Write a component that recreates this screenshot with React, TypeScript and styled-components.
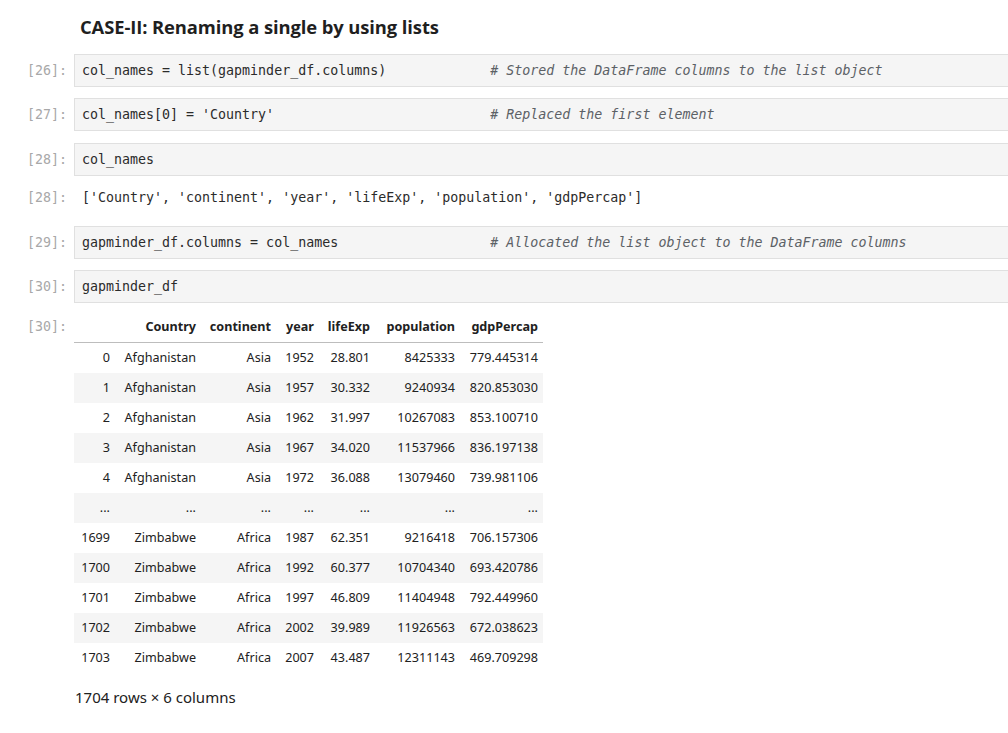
import React from "react";
import styled, { createGlobalStyle } from "styled-components";

const Global = createGlobalStyle`
  html, body { margin: 0; padding: 0; background: #ffffff; overflow: hidden; }
  body { font-family: "Noto Sans", "Open Sans", sans-serif; color: #212121; }
`;

const Page = styled.div`
  width: 1008px;
  height: 733px;
  overflow: hidden;
`;

const Notebook = styled.div`
  width: 1100px;
  display: flex;
  flex-direction: column;
  padding-top: 14px;
`;

const Heading = styled.h2`
  margin: 0 0 14px 80px;
  font-family: "Open Sans", "Noto Sans", sans-serif;
  font-weight: 700;
  font-size: 18.4px;
  line-height: 26px;
  color: #1f1f1f;
  letter-spacing: -0.1px;
`;

const Row = styled.div<{ $mt?: number }>`
  display: flex;
  align-items: flex-start;
  margin-top: ${(p) => p.$mt ?? 0}px;
`;

const Prompt = styled.div<{ $pt?: number }>`
  width: 67px;
  flex: 0 0 67px;
  padding-right: 7px;
  padding-top: ${(p) => p.$pt ?? 8}px;
  text-align: right;
  font-family: "DejaVu Sans Mono", "Liberation Mono", monospace;
  font-size: 13.3px;
  line-height: 17px;
  color: #a8a8a8;
  white-space: pre;
`;

const CodeBox = styled.div`
  flex: 1;
  background: #f5f5f5;
  border: 1px solid #e0e0e0;
  padding: 7px 7px;
  font-family: "DejaVu Sans Mono", "Liberation Mono", monospace;
  font-size: 13.3px;
  line-height: 17px;
  color: #2b2b2b;
  white-space: pre;
`;

const Comment = styled.span`
  font-style: italic;
  color: #5c6166;
`;

const OutText = styled.div`
  padding: 0 8px;
  font-family: "DejaVu Sans Mono", "Liberation Mono", monospace;
  font-size: 13.3px;
  line-height: 17px;
  color: #2b2b2b;
  white-space: pre;
`;

const OutputArea = styled.div`
  display: flex;
  flex-direction: column;
`;

const Table = styled.table`
  border-collapse: collapse;
  table-layout: fixed;
  width: 469px;
  font-family: "Noto Sans", "Open Sans", sans-serif;
  font-size: 12.6px;
  color: #212121;
`;

const Th = styled.th`
  text-align: right;
  font-weight: 700;
  padding: 0 5px 0 4px;
  height: 30px;
  line-height: 18px;
  white-space: nowrap;
  border-bottom: 1px solid #bdbdbd;
`;

const Tr = styled.tr`
  &:nth-child(even) { background: #f5f5f5; }
`;

const Td = styled.td`
  text-align: right;
  padding: 0 5px 0 4px;
  height: 30px;
  line-height: 18px;
  white-space: nowrap;
`;

const IndexTh = styled(Th)`
  font-weight: 400;
`;

const Footer = styled.div`
  margin-top: 15px;
  padding-left: 1px;
  font-family: "Noto Sans", "Open Sans", sans-serif;
  font-size: 15px;
  line-height: 18px;
  color: #212121;
`;

const widths = [41, 86, 75, 43, 56, 85, 83];
const headers = ["", "Country", "continent", "year", "lifeExp", "population", "gdpPercap"];

const rows: string[][] = [
  ["0", "Afghanistan", "Asia", "1952", "28.801", "8425333", "779.445314"],
  ["1", "Afghanistan", "Asia", "1957", "30.332", "9240934", "820.853030"],
  ["2", "Afghanistan", "Asia", "1962", "31.997", "10267083", "853.100710"],
  ["3", "Afghanistan", "Asia", "1967", "34.020", "11537966", "836.197138"],
  ["4", "Afghanistan", "Asia", "1972", "36.088", "13079460", "739.981106"],
  ["...", "...", "...", "...", "...", "...", "..."],
  ["1699", "Zimbabwe", "Africa", "1987", "62.351", "9216418", "706.157306"],
  ["1700", "Zimbabwe", "Africa", "1992", "60.377", "10704340", "693.420786"],
  ["1701", "Zimbabwe", "Africa", "1997", "46.809", "11404948", "792.449960"],
  ["1702", "Zimbabwe", "Africa", "2002", "39.989", "11926563", "672.038623"],
  ["1703", "Zimbabwe", "Africa", "2007", "43.487", "12311143", "469.709298"],
];

const pad = (s: string, n: number) => s + " ".repeat(Math.max(0, n - s.length));

export default function App() {
  return (
    <Page>
      <Global />
      <Notebook>
        <Heading>CASE-II: Renaming a single by using lists</Heading>

        <Row>
          <Prompt>[26]:</Prompt>
          <CodeBox>
            {pad("col_names = list(gapminder_df.columns)", 51)}
            <Comment># Stored the DataFrame columns to the list object</Comment>
          </CodeBox>
        </Row>

        <Row $mt={11}>
          <Prompt>[27]:</Prompt>
          <CodeBox>
            {pad("col_names[0] = 'Country'", 51)}
            <Comment># Replaced the first element</Comment>
          </CodeBox>
        </Row>

        <Row $mt={12}>
          <Prompt>[28]:</Prompt>
          <CodeBox>col_names</CodeBox>
        </Row>

        <Row $mt={13}>
          <Prompt $pt={0}>[28]:</Prompt>
          <OutText>['Country', 'continent', 'year', 'lifeExp', 'population', 'gdpPercap']</OutText>
        </Row>

        <Row $mt={20}>
          <Prompt>[29]:</Prompt>
          <CodeBox>
            {pad("gapminder_df.columns = col_names", 51)}
            <Comment># Allocated the list object to the DataFrame columns</Comment>
          </CodeBox>
        </Row>

        <Row $mt={11}>
          <Prompt>[30]:</Prompt>
          <CodeBox>gapminder_df</CodeBox>
        </Row>

        <Row $mt={9}>
          <Prompt $pt={6}>[30]:</Prompt>
          <OutputArea>
            <Table>
              <colgroup>
                {widths.map((w, i) => (
                  <col key={i} style={{ width: w }} />
                ))}
              </colgroup>
              <thead>
                <tr>
                  {headers.map((h, i) =>
                    i === 0 ? <IndexTh key={i}>{h}</IndexTh> : <Th key={i}>{h}</Th>
                  )}
                </tr>
              </thead>
              <tbody>
                {rows.map((r, ri) => (
                  <Tr key={ri}>
                    {r.map((c, ci) => (
                      <Td key={ci}>{c}</Td>
                    ))}
                  </Tr>
                ))}
              </tbody>
            </Table>
            <Footer>1704 rows × 6 columns</Footer>
          </OutputArea>
        </Row>
      </Notebook>
    </Page>
  );
}
